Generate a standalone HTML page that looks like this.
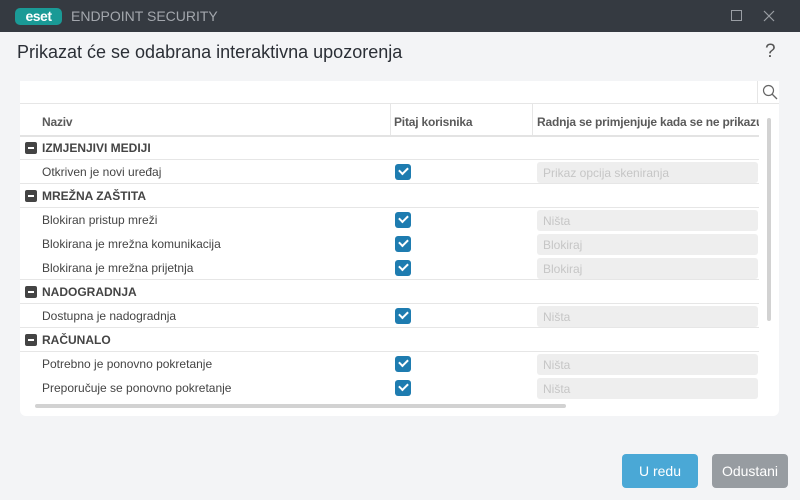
<!DOCTYPE html>
<html><head><meta charset="utf-8"><style>
*{margin:0;padding:0;box-sizing:border-box}
body{width:800px;height:500px;background:#f3f4f6;font-family:"Liberation Sans",sans-serif;position:relative;overflow:hidden;color:#333}
.a{position:absolute}
.tb{left:0;top:0;width:800px;height:32px;background:#353a41}
.logo{left:15px;top:8px;width:47px;height:17px;background:#1a9a96;border-radius:5px;color:#fff;font-weight:bold;font-size:14px;line-height:17px;text-align:center;letter-spacing:-0.5px}
.brand{left:71px;top:8px;color:#a3a7ad;font-size:14px;letter-spacing:0}
.title{left:17px;top:42px;font-size:18px;color:#2b2f36}
.panel{left:20px;top:81px;width:759px;height:335px;background:#fff;border-radius:0 0 6px 6px;overflow:hidden}
.t{font-size:12px;color:#444}
.h{font-size:12px;font-weight:bold;color:#5a5a5a;letter-spacing:-0.2px}
.g{font-size:12px;font-weight:bold;color:#444}
.line{height:1px;background:#e6e6e6}
.cb{width:16px;height:16px;background:#1e7cb0;border-radius:3px;position:absolute}
.cb:after{content:"";position:absolute;left:4px;top:3px;width:7px;height:4px;border-left:2.5px solid #fff;border-bottom:2.5px solid #fff;transform:rotate(-45deg)}
.box{width:221px;height:21px;background:#eeeeee;border-radius:3px;font-size:12px;color:#c6c6c6;padding:4px 0 0 6px}
.min{width:12px;height:12px;background:#444;border-radius:2px}
.min:after{content:"";position:absolute;left:3px;top:5px;width:6px;height:2px;background:#fff}
.btn{height:34px;border-radius:4px;color:#fff;font-size:14px;text-align:center;line-height:34px}
</style></head><body>
<div class="a tb"></div>
<div class="a logo">eset</div>
<div class="a brand">ENDPOINT SECURITY</div>
<div class="a" style="left:731px;top:10px;width:11px;height:11px;border:1px solid #9a9ea4"></div>
<svg class="a" style="left:763px;top:10px" width="12" height="12"><path d="M1 1L11 11M11 1L1 11" stroke="#9a9ea4" stroke-width="1.2"/></svg>
<div class="a title">Prikazat će se odabrana interaktivna upozorenja</div>
<div class="a" style="left:765px;top:41px;font-size:19px;color:#555">?</div>
<div class="a panel">
 <div class="a line" style="left:0;top:22px;width:759px"></div>
 <div class="a" style="left:737px;top:0;width:1px;height:22px;background:#e6e6e6"></div>
 <svg class="a" style="left:742px;top:3px" width="16" height="16"><circle cx="6.5" cy="6.5" r="5" fill="none" stroke="#666" stroke-width="1.2"/><path d="M10 10L15 15" stroke="#666" stroke-width="1.3"/></svg>
 <div class="a h" style="left:22px;top:34px">Naziv</div>
 <div class="a" style="left:370px;top:23px;width:1px;height:31px;background:#e6e6e6"></div>
 <div class="a h" style="left:374px;top:34px">Pitaj korisnika</div>
 <div class="a" style="left:512px;top:23px;width:1px;height:31px;background:#e6e6e6"></div>
 <div class="a h" style="left:517px;top:34px;white-space:nowrap;width:222px;overflow:hidden">Radnja se primjenjuje kada se ne prikazuje</div>
 <div class="a" style="left:0;top:54px;width:739px;height:2px;background:#e3e3e3"></div>

 <div class="a min" style="left:5px;top:61px"></div><div class="a g" style="left:22px;top:60px">IZMJENJIVI MEDIJI</div>
 <div class="a line" style="left:0;top:78px;width:739px"></div>
 <div class="a t" style="left:22px;top:84px">Otkriven je novi uređaj</div>
 <div class="a cb" style="left:375px;top:83px"></div>
 <div class="a box" style="left:517px;top:81px">Prikaz opcija skeniranja</div>
 <div class="a line" style="left:0;top:102px;width:739px"></div>

 <div class="a min" style="left:5px;top:109px"></div><div class="a g" style="left:22px;top:108px">MREŽNA ZAŠTITA</div>
 <div class="a line" style="left:0;top:126px;width:739px"></div>
 <div class="a t" style="left:22px;top:132px">Blokiran pristup mreži</div>
 <div class="a cb" style="left:375px;top:131px"></div>
 <div class="a box" style="left:517px;top:129px">Ništa</div>
 <div class="a t" style="left:22px;top:156px">Blokirana je mrežna komunikacija</div>
 <div class="a cb" style="left:375px;top:155px"></div>
 <div class="a box" style="left:517px;top:153px">Blokiraj</div>
 <div class="a t" style="left:22px;top:180px">Blokirana je mrežna prijetnja</div>
 <div class="a cb" style="left:375px;top:179px"></div>
 <div class="a box" style="left:517px;top:177px">Blokiraj</div>
 <div class="a line" style="left:0;top:198px;width:739px"></div>

 <div class="a min" style="left:5px;top:205px"></div><div class="a g" style="left:22px;top:204px">NADOGRADNJA</div>
 <div class="a line" style="left:0;top:222px;width:739px"></div>
 <div class="a t" style="left:22px;top:228px">Dostupna je nadogradnja</div>
 <div class="a cb" style="left:375px;top:227px"></div>
 <div class="a box" style="left:517px;top:225px">Ništa</div>
 <div class="a line" style="left:0;top:246px;width:739px"></div>

 <div class="a min" style="left:5px;top:253px"></div><div class="a g" style="left:22px;top:252px">RAČUNALO</div>
 <div class="a line" style="left:0;top:270px;width:739px"></div>
 <div class="a t" style="left:22px;top:276px">Potrebno je ponovno pokretanje</div>
 <div class="a cb" style="left:375px;top:275px"></div>
 <div class="a box" style="left:517px;top:273px">Ništa</div>
 <div class="a t" style="left:22px;top:300px">Preporučuje se ponovno pokretanje</div>
 <div class="a cb" style="left:375px;top:299px"></div>
 <div class="a box" style="left:517px;top:297px">Ništa</div>

 <div class="a" style="left:747px;top:37px;width:4px;height:203px;background:#d2d2d2;border-radius:2px"></div>
 <div class="a" style="left:15px;top:323px;width:531px;height:4px;background:#d2d2d2;border-radius:2px"></div>
</div>
<div class="a btn" style="left:622px;top:454px;width:76px;background:#4aa8d6">U redu</div>
<div class="a btn" style="left:712px;top:454px;width:76px;background:#979ca1">Odustani</div>
</body></html>
